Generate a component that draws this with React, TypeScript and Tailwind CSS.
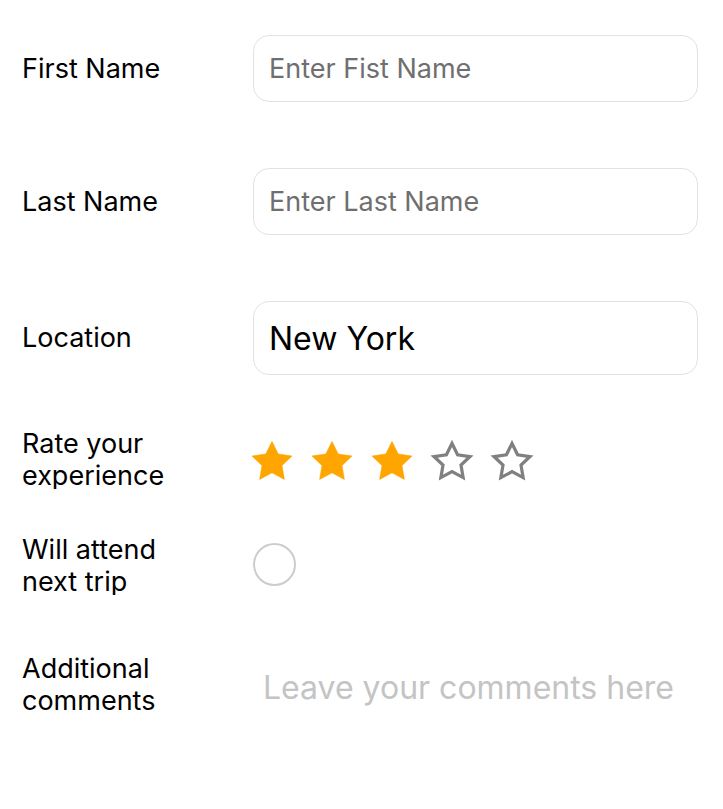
import React from "react";

const font = { fontFamily: "Inter, 'Noto Sans', sans-serif" };

const Star = ({ filled }: { filled: boolean }) => (
  <svg width="48" height="48" viewBox="0 0 24 24" className="shrink-0">
    <polygon
      points="12 2.2 15.09 8.5 22 9.5 17 14.3 18.18 21.2 12 17.9 5.82 21.2 7 14.3 2 9.5 8.91 8.5"
      fill={filled ? "#FFA500" : "none"}
      stroke={filled ? "#FFA500" : "#808080"}
      strokeWidth={filled ? 0.3 : 1.8}
      strokeLinejoin="miter"
      transform={filled ? undefined : "translate(12 12.2) scale(0.9) translate(-12 -12.2)"}
    />
  </svg>
);

const Label = ({ children, className = "" }: { children: React.ReactNode; className?: string }) => (
  <div className="w-[231px] shrink-0">
    <div className={`w-[170px] text-[27px] leading-[32px] text-black ${className}`}>{children}</div>
  </div>
);

export default function App() {
  return (
    <div className="min-h-screen bg-white" style={font}>
      <div className="flex flex-col pt-[35px] pl-[22px] pr-[25px]">
        <div className="flex items-center">
          <Label>First Name</Label>
          <input
            placeholder="Enter Fist Name"
            className="h-[67px] min-w-0 flex-1 rounded-[16px] border border-[#e2e2e2] pl-[15px] text-[27px] text-black outline-none placeholder:text-[#6f6f6f]"
          />
        </div>

        <div className="mt-[66px] flex items-center">
          <Label>Last Name</Label>
          <input
            placeholder="Enter Last Name"
            className="h-[67px] min-w-0 flex-1 rounded-[16px] border border-[#e2e2e2] pl-[15px] text-[27px] text-black outline-none placeholder:text-[#6f6f6f]"
          />
        </div>

        <div className="mt-[66px] flex items-center">
          <Label>Location</Label>
          <input
            readOnly
            value="New York"
            className="h-[74px] min-w-0 flex-1 rounded-[16px] border border-[#e2e2e2] pl-[15px] text-[32px] text-black outline-none"
          />
        </div>

        <div className="mt-[53px] flex items-center">
          <Label className="h-[61px] overflow-hidden">Rate your experience</Label>
          <div className="flex items-center gap-[12px] -ml-[5px] pt-[4px]">
            <Star filled />
            <Star filled />
            <Star filled />
            <Star filled={false} />
            <Star filled={false} />
          </div>
        </div>

        <div className="mt-[45px] flex items-center">
          <Label className="h-[61px] overflow-hidden">Will attend next trip</Label>
          <div className="h-[43px] w-[43px] rounded-full border-2 border-[#cccccc]" />
        </div>

        <div className="mt-[58px] flex items-center">
          <Label className="h-[64px]">Additional comments</Label>
          <div className="pl-[10px] pt-[5px] text-[32px] text-[#c4c4c4]">Leave your comments here</div>
        </div>
      </div>
    </div>
  );
}
